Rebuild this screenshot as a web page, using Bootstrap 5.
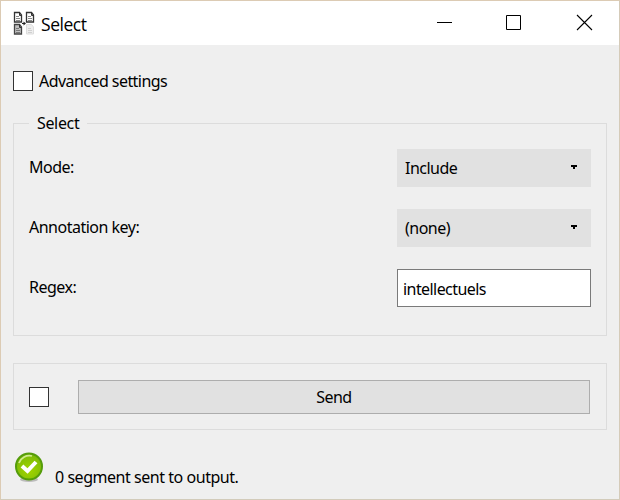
<!DOCTYPE html>
<html lang="en">
<head>
<meta charset="utf-8">
<meta name="viewport" content="width=device-width, initial-scale=1">
<title>Select</title>
<link href="https://cdn.jsdelivr.net/npm/bootstrap@5.3.0/dist/css/bootstrap.min.css" rel="stylesheet">
<style>
body{font-family:"Noto Sans",sans-serif;font-size:16px;line-height:20px;color:#000;letter-spacing:-.5px}
.win{width:620px;height:500px;border:1px solid #dccbb4;border-right-color:#d5cbb9;border-bottom-color:#d2cbba;background:#efefef;overflow:hidden}
.titlebar{height:44px;background:#fff;padding-left:12px}
.title-text{font-family:"Open Sans",sans-serif;font-size:17.5px;margin-left:6px;padding-top:2px;letter-spacing:-.45px}
.wbtn{width:70px;height:44px;padding:0;border:0;background:none}
.content{padding:0 12px}
.box{width:20px;height:20px;border:1px solid #333;background:#fff;border-radius:0;margin:0;flex:none;appearance:none}
.adv{margin-top:26px;height:20px}
.adv-text{margin-left:6px;letter-spacing:-.55px}
.group{border:1px solid #dcdcdc}
.g1{margin-top:32px;height:213px;padding:0 15px}
.legend-text{background:#efefef;padding:0 8px;height:20px;margin-top:-11px;letter-spacing:-.35px}
.line{height:38px;margin-bottom:22px}
.line.first{margin-top:16px}
.line-label{padding-bottom:2px}
.field{width:194px;height:38px;border:0;border-radius:0;background:#e1e1e1;padding:0 14px 0 8px}
.field svg{margin-bottom:2px}
.field:is(input){background:#fff;border:1px solid #7a7a7a;padding:2px 5px 0;letter-spacing:-.57px;color:#000;outline:0}
.g2{margin-top:27px;height:67px;padding:0 16px 0 15px}
.send{height:34px;margin-left:29px;border:1px solid #adadad;background:#e1e1e1;border-radius:0;padding:0;letter-spacing:-.55px;color:#000;line-height:20px}
.status{margin-top:22px;padding-left:2px}
.status-text{margin:15px 0 0 10px;letter-spacing:-.46px}
</style>
</head>
<body>
<main class="win">
<header class="titlebar d-flex align-items-center">
<svg width="22" height="24" viewBox="0 0 22 24" fill="none">
<g stroke="#333" stroke-width="1.300" fill="#fff"><path d="M1.500 1.500h5l2 2.500v7h-7z"/><path d="M13.500 1.500h5l2 2.500v7h-7z"/></g>
<path d="M1.500 13.500h5l2 2.500v7h-7z" stroke="#444" stroke-width="1.300" fill="#c0c0c0"/>
<path d="M13.500 13.500h5l2 2.500v7h-7z" stroke="#ddd" fill="#eee"/>
<path d="M3 5.500h3M3 7.500h4M3 9.500h4M15 5.500h3M15 7.500h4M15 9.500h4" stroke="#888"/>
<path d="M3 17.500h3M3 19.500h4M3 21.500h4" stroke="#777"/><path d="M15 17.500h3M15 19.500h4M15 21.500h4" stroke="#d0d0d0"/>
<path d="M6.500 1.500v3h2M18.500 1.500v3h2M6.500 13.500v3h2" stroke="#333"/>
<path d="M9 12.500h3" stroke="#222"/><path d="M10.500 10.500l2.500 2-2.500 2z" fill="#222"/>
</svg>
<span class="title-text">Select</span>
<div class="d-flex ms-auto">
<button class="wbtn" aria-label="Minimize"><svg class="d-block" width="70" height="44"><path d="M28 21.500h15" stroke="#000"/></svg></button>
<button class="wbtn" aria-label="Maximize"><svg class="d-block" width="70" height="44"><path d="M27.500 14.500h14v14h-14z" stroke="#000" fill="none"/></svg></button>
<button class="wbtn" aria-label="Close"><svg class="d-block" width="70" height="44"><path d="M28 14l15 15M43 14l-15 15" stroke="#000" stroke-width="1.100"/></svg></button>
</div>
</header>
<div class="content">
<label class="adv d-flex align-items-center"><input type="checkbox" class="box"><span class="adv-text">Advanced settings</span></label>
<section class="group g1 d-flex flex-column">
<div class="legend-text align-self-start">Select</div>
<div class="line first d-flex align-items-center justify-content-between"><span class="line-label">Mode:</span><div class="field d-flex align-items-center justify-content-between"><span>Include</span><svg width="6" height="4"><path d="M0 0h6v2H4v2H2V2H0z"/></svg></div></div>
<div class="line d-flex align-items-center justify-content-between"><span class="line-label">Annotation key:</span><div class="field d-flex align-items-center justify-content-between"><span>(none)</span><svg width="6" height="4"><path d="M0 0h6v2H4v2H2V2H0z"/></svg></div></div>
<div class="line d-flex align-items-center justify-content-between"><span class="line-label">Regex:</span><input class="field" type="text" value="intellectuels" aria-label="Regex"></div>
</section>
<section class="group g2 d-flex align-items-center"><input type="checkbox" class="box" aria-label="Send automatically"><button class="send btn flex-grow-1">Send</button></section>
<div class="status d-flex align-items-start">
<svg width="30" height="31" viewBox="0 0 30 31">
<defs><radialGradient id="g" cx=".5" cy=".65" r=".6"><stop offset="0" stop-color="#a2d500"/><stop offset="1" stop-color="#7dbb08"/></radialGradient></defs>
<ellipse cx="14" cy="27.500" rx="9" ry="2.500" fill="#bbb"/>
<circle cx="14" cy="14.500" r="13" fill="url(#g)" stroke="#559c0b" stroke-width="2"/>
<path d="M4 11a11 11 0 0 1 13-7" fill="none" stroke="#d0ea91" stroke-width="1.800"/>
<path d="M7 14l5.500 5 8.500-9" fill="none" stroke="#fff" stroke-width="4"/>
</svg>
<span class="status-text">0 segment sent to output.</span>
</div>
</div>
</main>
<script src="https://cdn.jsdelivr.net/npm/bootstrap@5.3.0/dist/js/bootstrap.bundle.min.js"></script>
</body>
</html>
